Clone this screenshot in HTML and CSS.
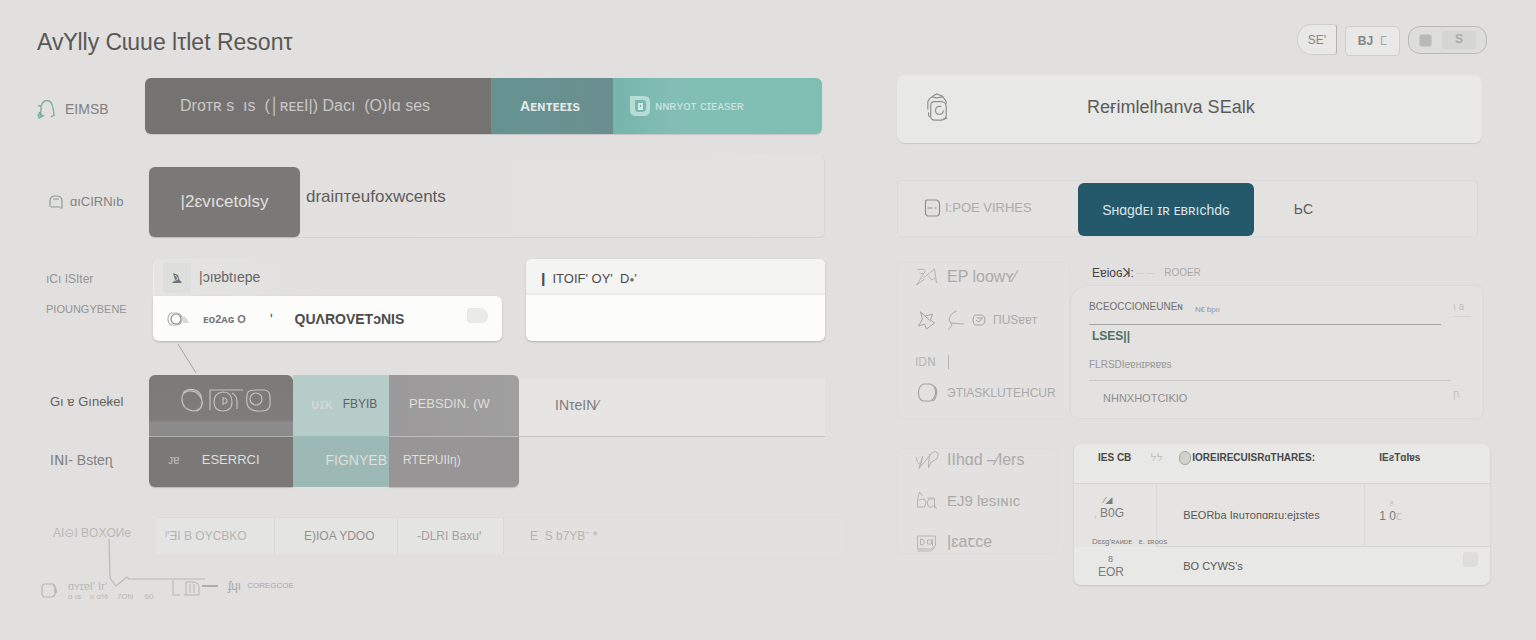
FILE: index.html
```html
<!DOCTYPE html>
<html lang="en">
<head>
<meta charset="utf-8">
<title>Avlly Cruue Irlet Resont</title>
<link rel="stylesheet" href="styles.css">
</head>
<body>
<header class="top">
  <h1 class="title">Avꓬlly Cɩuue lτlet Resonτ</h1>
  <div class="tools">
    <button class="tool tool-first">SE'</button>
    <button class="tool tool-mid"><b>BJ</b> &nbsp;<span class="soft">ⵎ</span></button>
    <button class="tool tool-last"><span class="swatch"></span><span class="chip">S</span></button>
  </div>
</header>
<main class="main">
  <section class="left">
    <div class="row row-steps">
      <div class="label label-top">
        <svg class="ic-arch" viewBox="0 0 18 22" fill="none" stroke="#7fb0a4" stroke-width="1.5"><path d="M1 8q4-1 3 4t2 6l-4 2-1-4M4 8q3-7 8-5 4 1 5 14l-3 2M2 14l2 5"/></svg>
        <span class="t14">EIMSB</span>
      </div>
      <div class="steps">
        <button class="step step-dark">Droтʀ s &nbsp;ıs &nbsp;(│ʀᴇᴇI|) Dacı &nbsp;(O)Iɑ ses</button>
        <button class="step step-teal">Aᴇɴᴛᴇᴇɪs</button>
        <button class="step step-mint">
          <svg class="ic-badge" viewBox="0 0 22 24" fill="none"><path d="M1 2h14q6 0 6 6v8q0 6-6 6H7q-6 0-6-6z" fill="#b7dcd6"/><path d="M6 6h8q3 0 3 4v4q0 4-4 4H9q-3 0-3-4z" fill="#7ab8af"/><path d="M9 9h5v7H9z" fill="#d3e9e5"/><path d="M11 11h1v2h-1z" fill="#6aa9a1"/></svg>
          <span>ɴɴʀʏᴏᴛ ᴄɪᴇᴀsᴇʀ</span>
        </button>
      </div>
    </div>

    <div class="row row-search">
      <div class="label label-search">
        <svg class="ic14" viewBox="0 0 14 14" fill="none" stroke="#8c9a92" stroke-width="1.2"><path d="M1 12V6q0-5 5-5h2q5 0 5 5v7h-2M2 12h9M4 4h6"/></svg>
        <span class="t13">ɑıCIRNıb</span>
      </div>
      <div class="panel-search">
        <button class="primary">|2ɛvıcetolsy</button>
        <span class="t17">draiптeufoxwcents</span>
      </div>
    </div>

    <div class="row row-cards">
      <div class="label label-stack">
        <span class="t12 faint">ıCı ISIter</span>
        <span class="t11 faint">PIOUNGYBENE</span>
      </div>
      <div class="cards">
        <article class="card card-a">
          <div class="card-tab">
            <span class="thumb"><svg viewBox="0 0 12 12" class="ic12"><path d="M2 1l5 2 1 4 3 4H1l3-3z" fill="#6f747a"/><path d="M4 3l3 4-4 2" stroke="#cfd2d4" fill="none"/></svg></span>
            <span class="t14">|ɔıɐbtıepe</span>
          </div>
          <div class="card-line">
            <svg class="ic-eye" viewBox="0 0 24 16" fill="none" stroke="#858585" stroke-width="1.1"><circle cx="9" cy="8" r="5"/><path d="M4 2h6q5 1 5 6 0 6-6 6H4q-3-2-3-6t3-6z" stroke="#b6b6b6"/><path d="M16 5q4 1 6 7h-6z" fill="#d9d9d9" stroke="none"/></svg>
            <span class="t11 bold mid">ᴇᴏ2ᴀɢ O</span>
            <span class="tick">'</span>
            <span class="t14 bold">QUɅROVETɔNIS</span>
            <span class="blob"></span>
          </div>
        </article>
        <article class="card card-b">
          <div class="card-head t13">❙ ITOIF' OY' &nbsp;D<span class="leaf">●</span>'</div>
          <div class="card-fill"></div>
        </article>
      </div>
    </div>

    <div class="row row-matrix">
      <div class="label label-pair">
        <span class="t13 ink">Gı ɐ Gıneꞣel</span>
        <span class="t14 soft-ink">IꓠI- Bsteɳ</span>
      </div>
      <div class="matrix">
        <div class="cell c-dials">
          <svg class="ic-dials" viewBox="0 0 92 26" fill="none" stroke="#c2c1c0" stroke-width="1.2"><path d="M4 5q4-5 12-3 7 2 7 12 0 9-9 9Q2 21 3 9q1-5 7-6 8-1 12 7t-4 13"/><path d="M31 22V2h33M44 4q9 0 9 10 0 9-9 9t-9-9q0-9 9-10zM53 5q5 3 5 8v8M44 9v8M44 10q4 0 4 3t-4 2"/><path d="M69 4q2-2 8-2h9q5 1 5 7v7q0 7-8 7h-4q-9 0-11-7-1-8 1-12z"/><circle cx="77" cy="11" r="6"/></svg>
        </div>
        <div class="cell c-mint"><span class="ghost bold">ᴜɪᴋ</span><span class="t12 ink">FBYIB</span></div>
        <div class="cell c-grey">PEBSDIN. (W</div>
        <div class="cell c-open">INτeIN⁄</div>
        <div class="cell c-dark2"><span class="t12 ghost">ᴊɐ</span><span>ESERRCI</span></div>
        <div class="cell c-mint2">FIGNYEB</div>
        <div class="cell c-grey2">RTEPUIIη)</div>
        <div class="cell"></div>
      </div>
      <svg class="lead" viewBox="0 0 20 32" fill="none" stroke="#a6a6a4"><path d="M1 1l18 29"/></svg>
    </div>

    <div class="row row-tabs">
      <div class="label label-tabs"><span class="t12 pale">AI⊝I BOXOИe</span></div>
      <div class="tabs">
        <button class="tab">ᴵ'ƎI B OYCBKO</button>
        <button class="tab tab-on">E)IOA YDOO</button>
        <button class="tab tab-mid">-DLRI Baxuꞌ</button>
        <button class="tab tab-last">E &nbsp;S b7YB⁻ *</button>
      </div>
    </div>

    <footer class="foot">
      <svg class="ic-foot" viewBox="0 0 16 16" fill="none" stroke="#b5b5b2" stroke-width="1.2"><path d="M4 2h7q3 0 3 4v5q0 4-4 4H4q-3 0-3-4V6q0-4 3-4zM12 3q4 3 3 8"/></svg>
      <span class="foot-note"><span class="t11 pale">ɑʏɪɐI' ꓲᴦ'</span><span class="t8 pale">ɑ ıs &nbsp; &nbsp;ıı ɑ% &nbsp; &nbsp;7ON &nbsp; &nbsp; 60</span></span>
      <svg class="ic-tag" viewBox="0 0 48 18" fill="none" stroke="#b5b5b2"><path d="M1 1v15h7M14 3h6q7 0 7 5v8H12M14 3v13M18 5v9M22 5v9"/><path d="M30 7h16" stroke="#999" stroke-width="1.4"/></svg>
      <span class="t12 soft">ʄɥı</span>
      <span class="t8 soft">COREGCOE</span>
      <svg class="wire" viewBox="0 0 150 56" fill="none" stroke="#b9bab2" stroke-width="1.2"><path d="M1 1l1 39 6 8 11-9 2 2h76"/></svg>
    </footer>
  </section>

  <section class="right">
    <div class="banner">
      <svg class="ic-bag" viewBox="0 0 22 30" fill="none" stroke="#8f8f8d" stroke-width="1.2"><path d="M3 25q-2-2-1-5M1 17V9q1-3 4-5l5-3 6 2 4 6v2M5 4l5 1 7-1"/><path d="M8 9h8q4 1 4 5v9q0 4-5 5H8q-4 0-4-4V13q0-4 4-4z"/><path d="M15 14q-6-1-6 4 0 4 4 4t4-4M17 27l4-1"/></svg>
      <h2 class="banner-title">Reғimlelhanva SEalk</h2>
    </div>

    <nav class="switch">
      <a class="switch-a" href="#views"><svg class="ic18" viewBox="0 0 16 18" fill="none" stroke="#8e8e8c" stroke-width="1.2"><path d="M2 1h10q3 1 3 4v8q0 4-3 4H3l-2-2V2zM3 9h5M10 9h2"/></svg><span>I:POE VIRHES</span></a>
      <a class="switch-b" href="#search">Sʜɑɡdᴇı ɪʀ ᴇʙʀıchdɢ</a>
      <a class="switch-c" href="#more">ЬC</a>
    </nav>

    <div class="block block-form">
      <nav class="side">
        <a href="#a"><svg class="ic-s" viewBox="0 0 24 20" fill="none" stroke="#b5b5b3"><path d="M2 3q6-2 8 1L1 18l8-6M4 6l4 1M8 11L19 2l2 14M13 9l3 4 4-2"/></svg><span class="t16">EP loowʏ⁄</span></a>
        <a href="#b"><svg class="ic-s" viewBox="0 0 24 20" fill="none" stroke="#a5a5a3"><path d="M5 2l5 4 7-2-2 6 4 3-8 6-2-5-6 2 4-7zM5 2l10 9"/></svg><svg class="ic-c" viewBox="0 0 18 20" fill="none" stroke="#adadab"><path d="M10 1Q3 3 2 10l3 5-4 5M4 13l13 1"/></svg><svg class="ic14" viewBox="0 0 14 14" fill="none" stroke="#a5a5a3"><path d="M3 2h7q3 1 3 5t-3 5H3Q1 11 1 7t2-5zM4 7q3 4 6-2M5 5h6"/></svg><span class="t12">ПUSɐɐᴛ</span></a>
        <a href="#c" class="s-short"><span class="t12">IDꓠ</span><span class="bar"></span></a>
        <a href="#d"><svg class="ic-s" viewBox="0 0 24 20" fill="none" stroke="#a5a5a3" stroke-width="1.2"><path d="M8 1h7q5 2 5 8t-5 9H8q-5-1-5-8 0-7 5-9zM18 3q4 2 3 8t-4 7" /></svg><span class="t12">ЭTIASKLUTEHCUR</span></a>
      </nav>
      <div class="form-wrap">
        <div class="form-head"><b>Eɐioɢꓘ:</b><span class="dash">--- ---</span><span class="soft t10">ROOER</span></div>
        <form class="form">
          <div class="field">
            <label for="f1">BCEOCCIONEUNEɴ</label><a class="mini" href="#more">Nꞓ ɓpıı</a><span class="corner">ı a</span>
            <input id="f1" class="in in-a" value="LSES||">
          </div>
          <div class="field field-b">
            <label for="f2">FLRSDIeɐʜɪᴘʀɐɐs</label>
            <input id="f2" class="in in-b" value="NHNXHOTCIKIO"><span class="corner corner-b">ꞃ</span>
          </div>
        </form>
      </div>
    </div>

    <div class="block block-table">
      <nav class="side side-b">
        <a href="#e"><svg class="ic-s" viewBox="0 0 26 20" fill="none" stroke="#b0b0ae"><path d="M1 7q1 6 5 8l2-9-4 13L18 2q4-2 6 1 1 6-7 9l-3 6 1-14"/></svg><span class="t16">IIhɑd –⁄lers</span></a>
        <a href="#f"><svg class="ic-s" viewBox="0 0 24 20" fill="none" stroke="#b5b5b3"><path d="M4 1q-3 6-2 15h7q3-4 0-8L3 9M4 1l3 4M12 7h7v10M18 8q-7-1-6 5t7 1l2 4"/></svg><span class="t15">EJ9 lɐsıɴıᴄ</span></a>
        <a href="#g"><svg class="ic-s" viewBox="0 0 24 20" fill="none" stroke="#b5b5b3"><path d="M2 4h18v9l-4 4H2zM2 19h13l5-4M5 7v6q4 0 4-3t-4-3M12 8h4v4h-4zM17 7v7"/></svg><span class="t16">|ɛaꞇce</span></a>
      </nav>
      <table class="table">
        <thead>
          <tr><th>IES CB <span class="thx">ᔭᔭ</span></th><th><span class="dot"></span>IOREIRECUISRɑTHARES:</th><th>IEƨTɑIɐs</th></tr>
        </thead>
        <tbody>
          <tr class="r1"><td class="num"><small>⁄◢</small><span><i>‚</i> B0G</span><em>Dɛɛɡ'ʀᴀᴎᴅᴇ &nbsp; ᴇ. ɪʀᴏᴏs</em></td><td>BEORba Iʀuтoпɑʀɪu:ejɪstes</td><td class="num last"><small class="rose">ƨ</small><span>1 0<i>ꞇ</i></span></td></tr>
          <tr class="r2"><td class="num"><small>8</small><span>EOR</span></td><td>BO CYWS's</td><td class="end"><span class="stamp"></span></td></tr>
        </tbody>
      </table>
    </div>
  </section>
</main>
</body>
</html>
```
FILE: styles.css
```css
* { box-sizing: border-box; }
body { margin: 0; background: #e1e0df; color: #666564; font-family: "Liberation Sans", "Noto Sans", "DejaVu Sans", sans-serif; font-size: 14px; line-height: 20px; }
button { font: inherit; color: inherit; border: 0; background: none; padding: 0; white-space: nowrap; cursor: pointer; }
a { color: inherit; text-decoration: none; white-space: nowrap; }
svg { flex: none; display: block; }
h1, h2 { margin: 0; font-weight: 400; white-space: nowrap; }
span { white-space: nowrap; }

.t8 { font-size: 8px; }
.t10 { font-size: 10px; }
.t11 { font-size: 11px; }
.t12 { font-size: 12px; }
.t13 { font-size: 13px; }
.t14 { font-size: 14px; }
.t15 { font-size: 15px; }
.t16 { font-size: 16px; }
.t17 { font-size: 17px; }
.bold { font-weight: 700; }
.ink { color: #646362; }
.soft-ink { color: #82817f; }
.mid { color: #777; }
.faint { color: #959492; }
.soft { color: #a9a9a7; }
.pale { color: #b9b8b6; }

.top { display: flex; justify-content: space-between; align-items: flex-start; padding: 24px 49px 0 37px; height: 75px; }
.title { font-size: 23px; line-height: 36px; color: #595856; }
.tools { display: flex; gap: 8px; font-size: 12px; color: #868684; }
.tool { height: 31px; border: 1px solid #d0cfcd; background: #e8e8e6; }
.tool-first { width: 40px; border-radius: 15px 3px 3px 15px; border-right-color: #b5b4b2; }
.tool-mid { width: 55px; border-radius: 5px; margin-top: 2px; height: 30px; }
.tool-last { width: 79px; margin-top: 2px; height: 28px; border-radius: 12px; border-color: #bab9b7; background: #dddddb; display: flex; align-items: center; justify-content: space-evenly; }
.swatch { width: 13px; height: 13px; border-radius: 3px; background: #b9b9b7; border: 1px solid #c9c9c7; }
.chip { width: 34px; height: 18px; line-height: 16px; background: #d5d5d3; color: #aaa; font-weight: 700; }

.main { display: grid; grid-template-columns: 788fr 593fr; gap: 72px; padding: 0 46px 0 37px; }
.left, .right { min-width: 0; position: relative; }
.row { display: grid; grid-template-columns: 112px minmax(0, 1fr); position: relative; }
.label { display: flex; align-items: center; color: #82817f; }

.row-steps { grid-template-columns: 108px minmax(0, 1fr); padding: 3px 3px 0 0; }
.label-top { gap: 10px; padding-top: 5px; }
.ic-arch { width: 18px; height: 22px; }
.steps { display: grid; grid-template-columns: 346fr 122fr 209fr; height: 56px; border-radius: 6px; overflow: hidden; box-shadow: 0 1px 1px #c6c5c3; color: #c8c7c5; }
.step { display: flex; align-items: center; }
.step-dark { background: #757372; padding-left: 35px; font-size: 16px; }
.step-teal { background: linear-gradient(90deg, #659391, #6b8e8f); justify-content: center; padding-right: 4px; font-weight: 700; font-size: 14px; color: #e2eae6; }
.step-mint { background: linear-gradient(90deg, #76b5ac, #82beb5 30%, #80beb3); padding-left: 16px; gap: 4px; font-size: 13px; color: #cde4df; }
.ic-badge { width: 22px; height: 24px; }
.ic14 { width: 14px; height: 14px; }
.ic12 { width: 12px; height: 12px; }
.ic18 { width: 17px; height: 18px; }

.row-search { margin-top: 21px; }
.label-search { gap: 7px; padding: 10px 0 0 12px; }
.panel-search { display: flex; align-items: center; height: 83px; padding-top: 11px; border-right: 1px solid #d9d8d6; border-bottom: 1px solid #d4d3d1; border-radius: 6px; background: linear-gradient(90deg, #e1e0df, #e3e2e1); color: #5e5d5c; }
.primary { width: 151px; height: 70px; border-radius: 6px; background: #7b7977; color: #e1e0de; font-size: 17px; margin-right: 6px; box-shadow: 0 1px 1px #bbb; }
.panel-search .t17 { padding-bottom: 10px; }

.row-cards { grid-template-columns: 116px minmax(0, 1fr); margin-top: 21px; }
.label-stack { flex-direction: column; align-items: flex-start; gap: 10px; padding: 10px 0 0 9px; }
.cards { display: grid; grid-template-columns: 349fr 299fr; gap: 24px; }
.card { border-radius: 6px; }
.card-tab { display: flex; align-items: center; gap: 8px; height: 37px; padding-left: 9px; background: linear-gradient(90deg, #e4e4e3, #e1e0df 50%); border-radius: 8px 0 0; border-left: 1px solid #eeeeec; }
.card-tab > span:last-child { padding-bottom: 2px; }
.thumb { display: flex; align-items: center; justify-content: center; width: 28px; height: 30px; background: #dededd; }
.card-line { display: flex; align-items: center; height: 45px; padding: 0 14px; background: #fcfcfb; border-radius: 0 6px 6px 6px; box-shadow: 0 1px 2px #b4b3b1; color: #4d4c4b; }
.ic-eye { width: 24px; height: 16px; margin-right: 12px; }
.tick { margin: 0 22px 0 24px; }
.blob { width: 21px; height: 15px; margin-left: auto; margin-bottom: 6px; border-radius: 2px 8px 6px 3px; background: #eaeae9; }
.card-b { background: #fcfcfb; box-shadow: 0 1px 2px #b4b3b1; }
.card-head { height: 36px; line-height: 40px; padding-left: 12px; background: #f4f4f3; border-bottom: 2px solid #ebebea; border-radius: 6px 6px 0 0; color: #4d4c4b; }
.leaf { font-size: 8px; color: #6a7a50; vertical-align: 1px; }

.row-matrix { margin: 34px 0 0; }
.label-pair { flex-direction: column; align-items: flex-start; justify-content: flex-start; gap: 38px; padding: 17px 0 0 13px; }
.matrix { display: grid; grid-template-columns: 144fr 96fr 130fr 306fr; grid-template-rows: 62px 50px; color: #dededc; }
.cell { display: flex; align-items: center; white-space: nowrap; padding-bottom: 4px; }
.c-dials { background: linear-gradient(#7b7a79, #7e7d7c 74%, #8d8c8c 78%, #8b8a8a); border-radius: 6px 6px 0 0; padding: 0 0 9px 30px; border-bottom: 1px solid #b2b2b1; }
.ic-dials { width: 92px; height: 26px; }
.c-mint { background: #b5ccc8; gap: 10px; padding-left: 18px; border-bottom: 1px solid #a2bcb8; }
.ghost { opacity: .65; }
.c-grey { background: linear-gradient(90deg, #9b9999, #a09f9f); padding-left: 20px; border-bottom: 1px solid #bdbcbc; border-radius: 0 6px 0 0; font-size: 13px; }
.c-open { background: #e6e5e4; margin-top: 3px; padding-left: 36px; color: #7e7d7c; border-bottom: 1px solid #c4c3c2; }
.c-dark2 { background: #7a7977; gap: 22px; padding-left: 19px; border-radius: 0 0 0 6px; box-shadow: 0 1px 1px #bbb; font-size: 13px; }
.c-mint2 { background: #9cb9b5; justify-content: flex-end; padding-right: 2px; font-size: 14px; }
.c-grey2 { background: #979595; padding-left: 14px; border-radius: 0 0 6px 0; box-shadow: 0 1px 1px #bbb; font-size: 12px; }
.lead { position: absolute; left: 140px; top: -32px; width: 20px; height: 32px; }

.row-tabs { grid-template-columns: 118px minmax(0, 1fr); margin: 30px -17px 0 0; }
.label-tabs { padding: 0 0 6px 16px; }
.tabs { display: grid; grid-template-columns: 120fr 123fr 106fr 338fr; height: 37px; border-top: 1px solid #dcdbda; background: #e2e1e0; color: #b5b4b2; font-size: 12px; }
.tab { text-align: left; padding-left: 10px; background: #e4e4e2; border-right: 1px solid #d9d9d7; }
.tab-on { padding-left: 29px; color: #929290; }
.tab-mid { padding-left: 19px; color: #a3a3a1; }
.tab-last { padding-left: 26px; background: none; border: 0; }

.foot { display: flex; align-items: center; height: 32px; margin-top: 20px; padding-left: 4px; position: relative; }
.ic-foot { width: 16px; height: 16px; margin-right: 11px; }
.foot-note { display: flex; flex-direction: column; width: 104px; }
.foot-note .t11 { line-height: 13px; }
.foot-note .t8 { line-height: 8px; }
.ic-tag { width: 48px; height: 18px; margin: 0 8px 4px 0; }
.foot > .t12, .foot > .t8 { margin: 0 6px 8px 0; }
.wire { position: absolute; left: 71px; top: -36px; width: 150px; height: 56px; }

.banner { display: grid; grid-template-columns: 30px 1fr; align-items: center; height: 68px; margin-right: 8px; padding: 0 29px 4px; border-radius: 8px; background: #e8e8e6; box-shadow: 0 1px 1px #c9c8c6; }
.ic-bag { width: 23px; height: 29px; }
.banner-title { font-size: 18px; line-height: 28px; color: #5c5b5a; padding-left: 131px; }

.switch { display: grid; grid-template-columns: 181fr 176fr 224fr; align-items: stretch; height: 57px; margin: 37px 12px 0 0; border: 1px solid #dad9d7; border-radius: 4px; background: #e3e2e1; }
.switch a { display: flex; align-items: center; font-size: 14px; }
.switch .switch-a { gap: 4px; padding: 0 0 2px 26px; color: #acaba9; font-size: 13px; }
.switch .switch-b { justify-content: center; margin-top: 2px; border-radius: 6px; background: #24586b; color: #dbe4e6; }
.switch-c { padding-left: 40px; color: #5d5c5b; }

.block { display: grid; }
.block-form { grid-template-columns: 173fr 414fr; margin: 25px 6px 0 0; }
.side { display: flex; flex-direction: column; padding: 3px 0 0 17px; border-radius: 8px; background: #e2e1e0; border: 1px solid #dedddc; color: #abaaa8; }
.side a { display: flex; align-items: center; gap: 7px; height: 22px; margin-bottom: 21px; }
.side a:last-child { margin-bottom: 0; }
.side .s-short { margin-bottom: 10px; height: 20px; color: #b7b6b4; gap: 12px; }
.bar { width: 1px; height: 14px; background: #b7b6b4; }
.ic-s { width: 25px; height: 20px; }
.ic-c { width: 18px; height: 20px; }
.form-wrap { min-width: 0; }
.form-head { display: flex; align-items: center; gap: 2px; height: 23px; padding: 0 0 2px 22px; font-size: 12px; color: #61605f; }
.form-head b { font-weight: 400; color: #454443; }
.dash { color: #bbb; font-size: 8px; margin-right: 8px; }
.form { padding: 10px 12px 6px 18px; border: 1px solid #dad9d7; border-radius: 18px 8px 8px 8px; background: #e3e2e1; }
.field { display: flex; flex-wrap: wrap; align-items: center; font-size: 10px; color: #70706e; }
.field-b { padding-top: 4px; color: #979694; }
.field label { white-space: nowrap; line-height: 22px; }
.mini { margin-left: 12px; padding-top: 6px; font-size: 8px; line-height: 12px; color: #8a98ad; }
.corner { margin-left: auto; width: 18px; height: 20px; border-bottom: 1px solid #d6d5d3; color: #bfbebc; font-size: 10px; }
.in { display: block; flex: 0 1 352px; min-width: 0; height: 26px; margin-top: 6px; padding: 0 3px 4px; border: 0; border-top: 1px solid #a7a6a4; background: none; font: inherit; outline: none; }
.in-a { font-size: 12px; font-weight: 700; color: #507061; }
.in-b { flex-basis: 362px; height: 32px; margin-top: 4px; padding: 2px 14px 0; border-top-color: #cbcac8; font-size: 11px; color: #8f8e8c; }
.corner-b { border: 0; }

.block-table { grid-template-columns: 161fr 416fr; column-gap: 16px; margin-top: 25px; align-items: start; }
.side-b { margin-top: 4px; height: 106px; padding-top: 0; }
.side-b a { margin-bottom: 19px; }
.table { width: 100%; border-collapse: separate; border-spacing: 0; table-layout: fixed; background: #e8e8e6; border-radius: 7px; box-shadow: 0 1px 2px #c4c3c1; color: #595857; font-size: 11px; }
.table th { height: 39px; padding: 0 0 12px 14px; text-align: left; font-size: 10px; font-weight: 700; white-space: nowrap; color: #4a4948; }
.table th:first-child { width: 20%; padding-left: 24px; }
.table th:nth-child(2) { width: 50%; padding-left: 27px; }
.thx { color: #c0bfbd; font-weight: 400; padding-left: 16px; }
.dot { display: inline-block; width: 12px; height: 14px; margin: 0 1px 0 -5px; border: 1px solid #a5a6a2; border-radius: 6px; background: #d0d3cc; vertical-align: -4px; }
.table td { padding: 0 0 0 26px; white-space: nowrap; }
.r1 td { height: 64px; border-top: 1px solid #d6d5d3; border-right: 1px solid #dad9d7; background: #e5e4e3; border-bottom: 1px solid #d6d5d3; }
.r1 td:first-child { border-bottom-color: #e5e4e3; }
.r1 td:last-child { border-right: 0; }
.table .num { padding-left: 24px; color: #7d7c7a; font-size: 12px; line-height: 14px; }
.table .last { padding: 0 0 10px 14px; }
.num small, .num span, .num em { display: block; font-style: normal; }
.num small { padding-left: 10px; font-size: 9px; line-height: 12px; }
.num i { font-style: normal; color: #c2c1bf; }
.num em { margin-left: -2px; padding-top: 18px; font-size: 8px; line-height: 8px; }
.r1 .num:first-child { padding-left: 20px; vertical-align: bottom; }
.r2 td { height: 38px; }
.rose { color: #d3bfc7; }
.table .end { padding: 0 12px 8px 0; text-align: right; }
.stamp { display: inline-block; width: 15px; height: 15px; border-radius: 3px; background: #dedddc; }
```
